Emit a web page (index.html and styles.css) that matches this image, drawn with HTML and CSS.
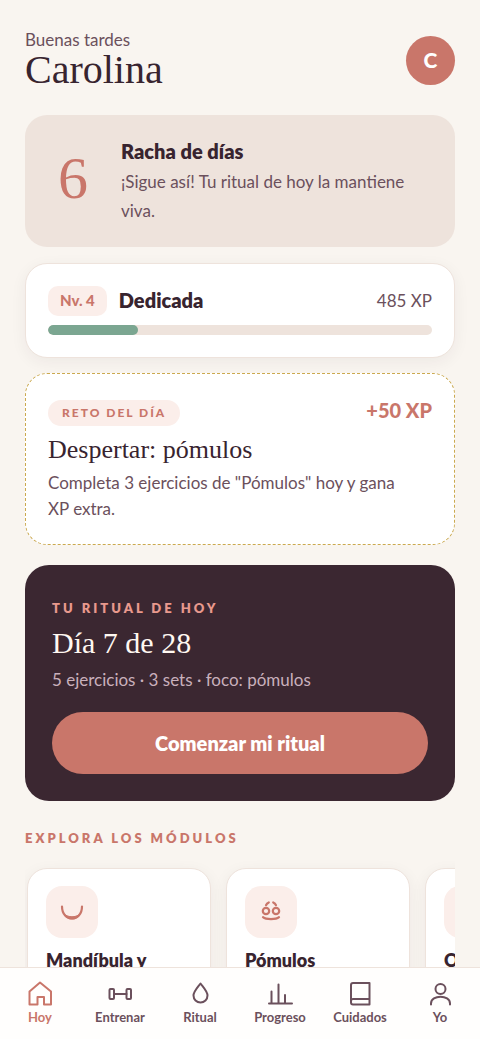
FILE: index.html
```html
<!DOCTYPE html>
<html lang="es">
<head>
<meta charset="utf-8">
<meta name="viewport" content="width=device-width, initial-scale=1">
<title>Hoy</title>
<link rel="stylesheet" href="styles.css">
</head>
<body>
<div class="app">
  <main class="content">
    <header class="header">
      <div>
        <p class="greeting">Buenas tardes</p>
        <h1 class="name">Carolina</h1>
      </div>
      <button class="avatar" type="button" aria-label="Perfil de Carolina">C</button>
    </header>

    <section class="streak">
      <span class="streak-count">6</span>
      <div class="streak-body">
        <h2 class="strong-title">Racha de días</h2>
        <p class="streak-text">¡Sigue así! Tu ritual de hoy la mantiene viva.</p>
      </div>
    </section>

    <section class="card level">
      <div class="row">
        <span class="level-badge">Nv. 4</span>
        <h2 class="strong-title level-name">Dedicada</h2>
        <span class="xp">485 XP</span>
      </div>
      <div class="bar" role="progressbar" aria-label="Progreso del nivel" aria-valuenow="23" aria-valuemin="0" aria-valuemax="100">
        <div class="bar-fill" style="width: 23.4%"></div>
      </div>
    </section>

    <section class="challenge">
      <div class="row challenge-top">
        <span class="pill">RETO DEL DÍA</span>
        <span class="reward">+50 XP</span>
      </div>
      <h2 class="challenge-title">Despertar: pómulos</h2>
      <p class="challenge-text">Completa 3 ejercicios de "Pómulos" hoy y gana XP extra.</p>
    </section>

    <section class="ritual">
      <p class="eyebrow eyebrow-light">TU RITUAL DE HOY</p>
      <h2 class="ritual-title">Día 7 de 28</h2>
      <p class="ritual-text">5 ejercicios · 3 sets · foco: pómulos</p>
      <button class="cta" type="button">Comenzar mi ritual</button>
    </section>

    <h2 class="eyebrow section-title">EXPLORA LOS MÓDULOS</h2>
    <div class="modules">
      <a class="module" href="#mandibula">
        <span class="tile"><svg width="28" height="28" viewBox="0 0 28 28"><path d="M4 8.500c0 16 20 16 20 0" stroke-width="2.200"/><path d="M6.500 16.500c4 3 11 3 15 0-3 6-12 6-15 0z" fill="currentColor" stroke-width="1"/></svg></span>
        <span class="module-name">Mandíbula y</span>
      </a>
      <a class="module" href="#pomulos">
        <span class="tile"><svg width="28" height="28" viewBox="0 0 28 28"><g stroke-width="2.200"><circle cx="9" cy="13" r="3.200"/><circle cx="19" cy="13" r="3.200"/><path d="M9 7.200q.800-1.800 2.800-2.700M19 7.200q-.800-1.800-2.800-2.700M6 19.200c3 2.600 13 2.600 16 0"/></g></svg></span>
        <span class="module-name">Pómulos</span>
      </a>
      <a class="module" href="#ojos">
        <span class="tile"></span>
        <span class="module-name">Ojos</span>
      </a>
    </div>
  </main>

  <nav class="tabs" aria-label="Principal">
    <a class="tab tab-active" href="#hoy" aria-current="page"><svg width="26" height="26" viewBox="0 0 26 26"><path d="M2.500 10.500L13 1.500l11 9V23.500h-7v-7.500h-6.500v7.500h-8z"/></svg>Hoy</a>
    <a class="tab" href="#entrenar"><svg width="26" height="26" viewBox="0 0 26 26"><rect x="2.500" y="8" width="4.500" height="10" rx="1"/><rect x="19.500" y="8" width="4.500" height="10" rx="1"/><path d="M7 13h12.500"/></svg>Entrenar</a>
    <a class="tab" href="#ritual"><svg width="26" height="26" viewBox="0 0 26 26"><path d="M13.500 2.500c3 4 7 8 7 12a7 7 0 0 1-14 0c0-4 4-8 7-12z"/></svg>Ritual</a>
    <a class="tab" href="#progreso"><svg width="26" height="26" viewBox="0 0 26 26"><path d="M2 22.500h23M4.500 22V10.500M11.500 22V3.500M18 22v-8"/></svg>Progreso</a>
    <a class="tab" href="#cuidados"><svg width="26" height="26" viewBox="0 0 26 26"><path d="M6 2h16.500v21.500H6a2 2 0 0 1-2-2V4a2 2 0 0 1 2-2zM4 20a2 2 0 0 1 2-2h16.500"/></svg>Cuidados</a>
    <a class="tab" href="#yo"><svg width="26" height="26" viewBox="0 0 26 26"><circle cx="13.500" cy="8" r="5"/><path d="M4 23.500v-1c0-9 19-9 19 0v1"/></svg>Yo</a>
  </nav>
</div>
</body>
</html>
```
FILE: styles.css
```css
* { box-sizing: border-box; }

:root {
  --ink: #38242f;
  --muted: #6b505c;
  --rose: #c9766a;
  --blush: #fbeeea;
  --sand: #eee3dc;
  --cream: #f9f5f0;
}

body {
  margin: 0;
  background: var(--cream);
  color: var(--ink);
  font-family: Lato, "Open Sans", sans-serif;
}

h1, h2, p { margin: 0; }
button { border: 0; font-family: inherit; cursor: pointer; }
a { text-decoration: none; }
svg { fill: none; stroke: currentColor; stroke-linecap: round; stroke-linejoin: round; }

.app { display: flex; flex-direction: column; height: 100vh; }

.content {
  flex: 1;
  min-height: 0;
  overflow-y: auto;
  padding: 30px 25px 0;
  scrollbar-width: none;
}

.header { display: flex; align-items: center; justify-content: space-between; margin-bottom: 25px; }
.greeting { color: var(--muted); font-size: 17px; line-height: 20px; }
.name {
  font-family: "Liberation Serif", serif;
  font-size: 40px;
  font-weight: 400;
  line-height: 40px;
}
.avatar {
  width: 49px;
  height: 49px;
  padding: 0 0 2px;
  border-radius: 50%;
  background: var(--rose);
  color: #fff;
  font-size: 21px;
  font-weight: 900;
}

.streak {
  display: flex;
  align-items: center;
  gap: 22px;
  padding: 22px;
  border-radius: 22px;
  background: var(--sand);
  margin-bottom: 16px;
}
.streak-count {
  width: 52px;
  flex-shrink: 0;
  padding-bottom: 6px;
  color: var(--rose);
  font-family: "Liberation Serif", serif;
  font-size: 60px;
  line-height: 60px;
  text-align: center;
}
.streak-body { flex: 1; }
.strong-title { padding-bottom: 2px; font-size: 20px; font-weight: 800; line-height: 28px; }
.streak-text { color: var(--muted); font-size: 17px; line-height: 29px; }

.card {
  border: 1px solid var(--sand);
  border-radius: 22px;
  background: #fff;
  box-shadow: 0 4px 16px rgba(56, 36, 47, 0.06);
}
.level { padding: 22px; margin-bottom: 15px; }
.row { display: flex; align-items: center; }
.level-badge {
  padding: 0 12px 2px;
  margin-right: 12px;
  border-radius: 10px;
  background: var(--blush);
  color: var(--rose);
  font-size: 15px;
  font-weight: 900;
  line-height: 28px;
}
.level-name { flex: 1; }
.xp { padding-bottom: 2px; color: var(--muted); font-size: 17px; }
.bar { height: 10px; margin-top: 9px; border-radius: 5px; background: var(--sand); overflow: hidden; }
.bar-fill { height: 100%; border-radius: 5px; background: #7ba691; }

.challenge {
  padding: 22px;
  border: 1px dashed #cba94f;
  border-radius: 22px;
  background: #fff;
  margin-bottom: 20px;
}
.challenge-top { justify-content: space-between; }
.pill {
  padding: 0 14px;
  margin-top: 4px;
  border-radius: 13px;
  background: var(--blush);
  color: var(--rose);
  font-size: 12px;
  font-weight: 900;
  letter-spacing: 2px;
  line-height: 26px;
}
.reward { padding-bottom: 2px; color: var(--rose); font-size: 20px; font-weight: 900; line-height: 28px; }
.challenge-title {
  margin: 7px 0 4px;
  font-family: "Liberation Serif", serif;
  font-size: 26px;
  font-weight: 400;
  line-height: 33px;
}
.challenge-text { padding-right: 16px; color: var(--muted); font-size: 17px; line-height: 26px; }

.ritual { padding: 32px 27px 27px; border-radius: 24px; background: #3b2731; }
.eyebrow { color: var(--rose); font-size: 13px; font-weight: 800; letter-spacing: 3px; line-height: 22px; }
.eyebrow-light { color: #e8998d; }
.ritual-title {
  margin: 5px 0;
  color: #fff8f1;
  font-family: "Liberation Serif", serif;
  font-size: 30px;
  font-weight: 400;
  line-height: 38px;
}
.ritual-text { color: #c9b0bc; font-size: 17px; line-height: 26px; }
.cta {
  display: block;
  width: 100%;
  margin-top: 19px;
  padding: 16px;
  border-radius: 31px;
  background: var(--rose);
  color: #fff;
  font-size: 20px;
  font-weight: 800;
  line-height: 30px;
}

.section-title { margin: 26px 0 7px; }
.modules { display: flex; gap: 15px; padding: 12px 2px 24px; overflow-x: auto; scrollbar-width: none; }
.module {
  flex: 0 0 184px;
  display: flex;
  flex-direction: column;
  gap: 9px;
  padding: 17px 18px;
  border: 1px solid var(--sand);
  border-radius: 20px;
  background: #fff;
  box-shadow: 0 4px 16px rgba(56, 36, 47, 0.06);
  color: var(--ink);
}
.tile {
  display: flex;
  align-items: center;
  justify-content: center;
  width: 52px;
  height: 52px;
  border-radius: 16px;
  background: var(--blush);
  color: var(--rose);
}
.module-name { font-size: 18px; font-weight: 800; line-height: 26px; }

.tabs { display: flex; border-top: 1px solid var(--sand); background: #fffefd; }
.tab {
  flex: 1;
  display: flex;
  flex-direction: column;
  align-items: center;
  gap: 1px;
  padding: 13px 0;
  color: var(--muted);
  font-size: 13px;
  font-weight: 700;
  line-height: 18px;
}
.tab svg { stroke-width: 2; }
.tab-active { color: var(--rose); }
```
